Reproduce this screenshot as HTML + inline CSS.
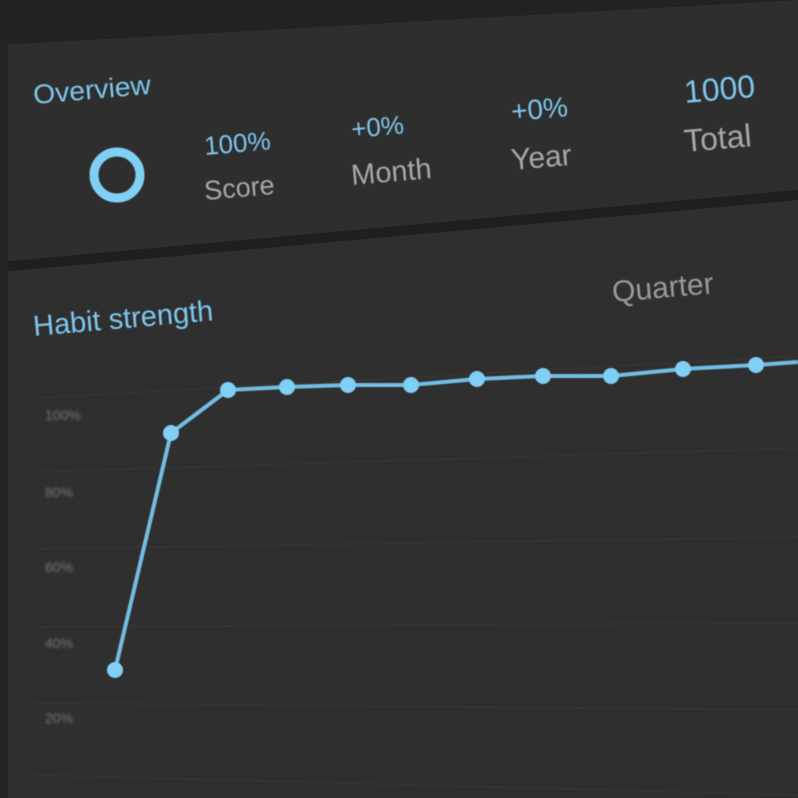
<!DOCTYPE html>
<html><head><style>
html,body{margin:0;padding:0;background:#222;width:798px;height:798px;overflow:hidden}
svg{display:block}
text{font-family:"Liberation Sans",sans-serif}
</style></head><body>
<svg width="798" height="798" viewBox="0 0 798 798">
<defs>
<filter id="b1"><feGaussianBlur stdDeviation="1.3"/></filter>
<filter id="b0"><feGaussianBlur stdDeviation="0.6"/></filter>
</defs>
<rect width="798" height="798" fill="#222"/>
<polygon points="0,45 798,0 798,190 0,262" fill="#2e2e2e"/>
<polygon points="0,262 798,190 798,200 0,272" fill="#1f1f1f"/>
<polygon points="0,272 798,200 798,798 0,798" fill="#2f2f2f"/>
<rect x="0" y="40" width="8" height="758" fill="#252525"/>
<g filter="url(#b0)">
<text x="34" y="104" font-size="27" fill="#7ec8ee" transform="rotate(-5 34 104)" textLength="118" lengthAdjust="spacingAndGlyphs">Overview</text>
<circle cx="117" cy="175" r="23" fill="none" stroke="#80cff5" stroke-width="9"/>
<text x="205" y="155" font-size="26" fill="#7ec8ee" transform="rotate(-5 205 155)">100%</text>
<text x="205" y="200" font-size="27" fill="#a8a8a8" transform="rotate(-5 205 200)">Score</text>
<text x="352" y="138" font-size="26" fill="#7ec8ee" transform="rotate(-5 352 138)">+0%</text>
<text x="352" y="185" font-size="29" fill="#a8a8a8" transform="rotate(-5 352 185)">Month</text>
<text x="512" y="121" font-size="28" fill="#7ec8ee" transform="rotate(-5 512 121)">+0%</text>
<text x="512" y="170" font-size="30" fill="#a8a8a8" transform="rotate(-5 512 170)">Year</text>
<text x="685" y="103" font-size="32" fill="#7ec8ee" transform="rotate(-5 685 103)">1000</text>
<text x="685" y="152" font-size="32" fill="#a8a8a8" transform="rotate(-5 685 152)">Total</text>
<text x="34" y="336" font-size="29" fill="#7ec8ee" transform="rotate(-5 34 336)">Habit strength</text>
<text x="613" y="302" font-size="30" fill="#9a9a9a" transform="rotate(-5 613 302)">Quarter</text>
</g>
<g stroke="#343434" stroke-width="2">
<line x1="35" y1="398" x2="798" y2="356"/>
<line x1="35" y1="472" x2="798" y2="448"/>
<line x1="35" y1="549" x2="798" y2="537"/>
<line x1="35" y1="627" x2="798" y2="623"/>
<line x1="35" y1="703" x2="798" y2="710"/>
<line x1="35" y1="775" x2="798" y2="795"/>
</g>
<g filter="url(#b1)" fill="#777" font-size="14">
<text x="45" y="420">100%</text>
<text x="45" y="497">80%</text>
<text x="45" y="572">60%</text>
<text x="45" y="648">40%</text>
<text x="45" y="723">20%</text>
</g>
<g filter="url(#b0)">
<polyline points="115,670 171,433 228,390 287,387 348,385 411,385 477,379 543,376 611,376 683,369 756,365 798,362" fill="none" stroke="#72bde4" stroke-width="4"/>
<g fill="#80cff5">
<circle cx="115" cy="670" r="8"/><circle cx="171" cy="433" r="8"/><circle cx="228" cy="390" r="8"/>
<circle cx="287" cy="387" r="8"/><circle cx="348" cy="385" r="8"/><circle cx="411" cy="385" r="8"/>
<circle cx="477" cy="379" r="8"/><circle cx="543" cy="376" r="8"/><circle cx="611" cy="376" r="8"/>
<circle cx="683" cy="369" r="8"/><circle cx="756" cy="365" r="8"/>
</g>
</g>
</svg>
</body></html>
